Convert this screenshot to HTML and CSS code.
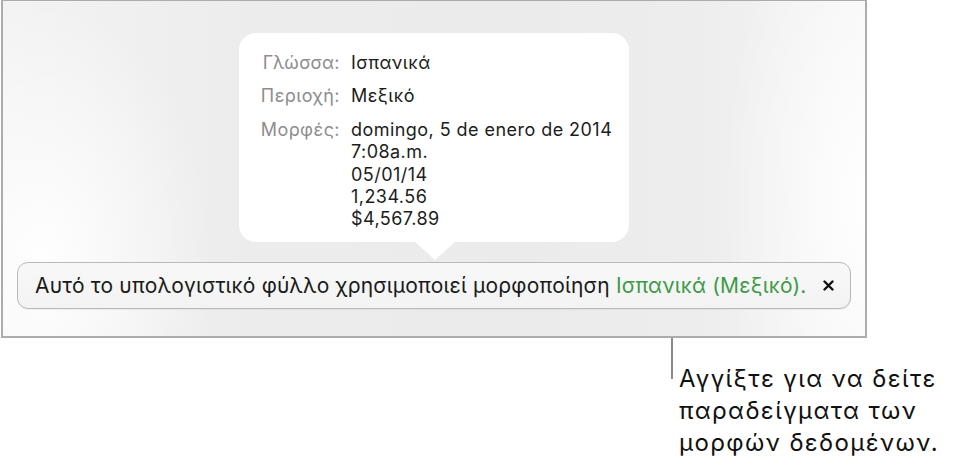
FILE: index.html
```html
<!DOCTYPE html>
<html lang="el">
<head>
<meta charset="utf-8">
<link rel="stylesheet" href="styles.css">
</head>
<body>
<div class="stage">
  <div class="frame">
    <div class="popover">
      <div class="label">Γλώσσα:</div><div class="value">Ισπανικά</div>
      <div class="label">Περιοχή:</div><div class="value">Μεξικό</div>
      <div class="label">Μορφές:</div>
      <div class="value">domingo, 5 de enero de 2014<br>7:08a.m.<br>05/01/14<br>1,234.56<br>$4,567.89</div>
    </div>
    <div class="banner">
      <span class="msg">Αυτό το υπολογιστικό φύλλο χρησιμοποιεί μορφοποίηση <span class="link">Ισπανικά (Μεξικό).</span></span>
      <svg class="close" width="11" height="11" viewBox="0 0 11 11"><path d="M1.5 1.5 L9.5 9.5 M9.5 1.5 L1.5 9.5" stroke="#111" stroke-width="2.4" stroke-linecap="round"/></svg>
    </div>
  </div>
  <div class="callout">
    <div class="line"></div>
    <div class="note">Αγγίξτε για να δείτε<br>παραδείγματα των<br>μορφών δεδομένων.</div>
  </div>
</div>
</body>
</html>
```

FILE: styles.css
```css
html, body {
  margin: 0;
  padding: 0;
  background: #ffffff;
}
body {
  font-family: Inter, Roboto, "Noto Sans", sans-serif;
  color: #1c1c1c;
}
.stage {
  display: flex;
  flex-direction: column;
  width: 955px;
  height: 473px;
}
.frame {
  position: relative;
  margin-left: 1px;
  width: 862px;
  height: 335px;
  border: 2px solid #acacac;
  border-top-width: 1px;
  box-sizing: content-box;
  background:
    radial-gradient(ellipse 170px 260px at 40px 260px, rgba(255,255,255,0.95), rgba(255,255,255,0) 100%),
    radial-gradient(ellipse 140px 330px at 860px 200px, rgba(255,255,255,0.9), rgba(255,255,255,0) 100%),
    linear-gradient(90deg, #f3f3f3 0%, #ececec 30%, #ebebeb 60%, #ededed 80%, #f6f6f6 100%);
  display: flex;
  flex-direction: column;
  align-items: flex-start;
}
.popover {
  position: relative;
  margin-top: 32px;
  margin-left: 236px;
  width: 390px;
  height: 209px;
  box-sizing: border-box;
  background: #ffffff;
  border-radius: 17px;
  padding: 19px 0 0 18px;
  display: grid;
  grid-template-columns: 81px auto;
  column-gap: 13px;
  row-gap: 11px;
  align-content: start;
  font-size: 18px;
  letter-spacing: 0.45px;
  line-height: 22.4px;
}
.popover::after {
  content: "";
  position: absolute;
  left: 175px;
  top: 208px;
  width: 0;
  height: 0;
  border-left: 21px solid transparent;
  border-right: 21px solid transparent;
  border-top: 19px solid #ffffff;
}
.label {
  color: #8d8d8d;
  text-align: right;
  white-space: nowrap;
  margin-right: -2px;
}
.value {
  color: #1c1c1c;
  white-space: nowrap;
}
.banner {
  margin-top: 20px;
  margin-left: 14px;
  width: 834px;
  height: 47px;
  box-sizing: border-box;
  border: 1px solid #b9b9b9;
  border-radius: 11px;
  background: linear-gradient(180deg, #f8f8f8 0%, #f3f3f3 100%);
  box-shadow: 0 1px 0 rgba(0,0,0,0.05);
  display: flex;
  align-items: center;
  padding: 0 0 0 17px;
  font-size: 21px;
  letter-spacing: 0.2px;
  color: #1a1a1a;
}
.link {
  color: #3f9a48;
}
.close {
  margin-left: 16px;
  flex: none;
}
.callout {
  display: flex;
  align-items: flex-start;
  margin-left: 671px;
  margin-top: -28px;
}
.line {
  width: 2px;
  height: 69px;
  background: #8a8a8a;
}
.note {
  margin-top: 53px;
  margin-left: 6px;
  font-size: 24px;
  letter-spacing: 1.4px;
  line-height: 32px;
  color: #111;
  white-space: nowrap;
}
```
